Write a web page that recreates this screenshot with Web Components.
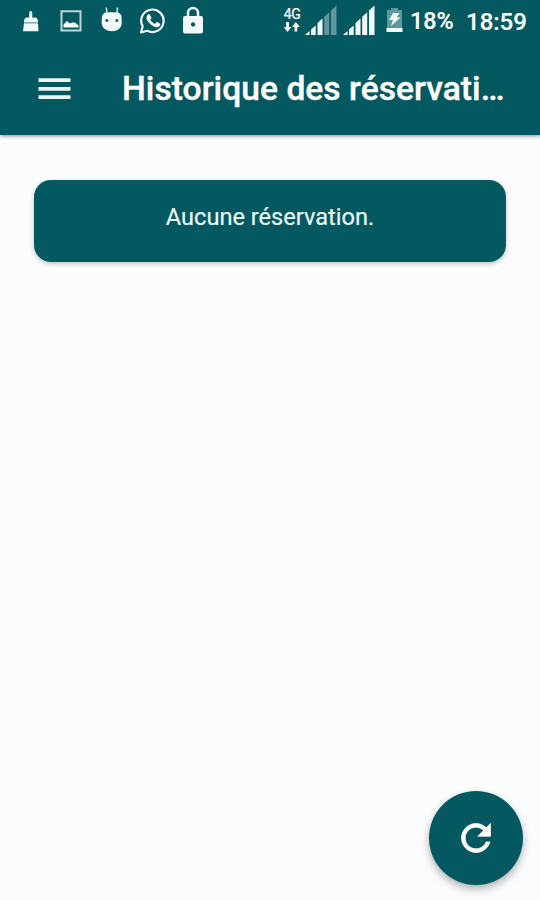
<!DOCTYPE html>
<html lang="fr">
<head>
<meta charset="utf-8">
<title>Historique des réservations</title>
<style>
  html, body {
    margin: 0;
    height: 100%;
  }
  body {
    --primary: #04585f;
    --page: #fbfcfe;
    font-family: Roboto, "Noto Sans", sans-serif;
    color: #fff;
    background: var(--page);
    overflow: hidden;
  }
</style>
</head>
<body>
<history-page>
  <status-bar slot="status" network="4G" battery="18%" time="18:59"></status-bar>
  <app-toolbar slot="toolbar">Historique des réservati…</app-toolbar>
  <info-card>Aucune réservation.</info-card>
  <refresh-button slot="fab"></refresh-button>
</history-page>

<script>
class HistoryPage extends HTMLElement {
    constructor() {
        super();
        this.attachShadow({ mode: "open" });
        this.shadowRoot.innerHTML = `
        <style>
        :host {
          display: flex;
          flex-direction: column;
          height: 900px;
          width: 540px;
          background: var(--page);
        }
        header {
          background: var(--primary);
          height: 135px;
          box-shadow: 0 1px 4px rgba(0, 0, 0, 0.45);
        }
        main {
          flex: 1;
          padding: 45px 34px 0;
        }
        footer {
          display: flex;
          justify-content: flex-end;
          padding: 0 17px 15.500px 0;
        }
        </style>
        <header>
          <slot name="status"></slot>
          <slot name="toolbar"></slot>
        </header>
        <main><slot></slot></main>
        <footer><slot name="fab"></slot></footer>`;
    }
}

class StatusBar extends HTMLElement {
    constructor() {
        super();
        this.attachShadow({ mode: "open" });
        this.shadowRoot.innerHTML = `
        <style>
        :host {
          display: flex;
          align-items: center;
          justify-content: space-between;
          box-sizing: border-box;
          height: 42px;
          padding: 0 14px 0 22px;
          font-weight: 500;
        }
        div {
          display: flex;
          align-items: center;
        }
        svg {
          display: block;
          fill: #f2f9fa;
        }
        .network {
          flex-direction: column;
          width: 18px;
          height: 42px;
          margin-right: 4px;
          padding-top: 9px;
          box-sizing: border-box;
        }
        .network span {
          font-size: 14px;
          font-weight: 400;
          letter-spacing: -0.500px;
          line-height: 10px;
          margin-bottom: 3px;
        }
        .signal {
          margin-right: 6px;
        }
        .battery {
          margin: 0 7px 0 11px;
        }
        span {
          white-space: nowrap;
          line-height: 42px;
          -webkit-text-stroke: 0.200px;
        }
        .level {
          font-size: 23.300px;
          width: 56px;
        }
        .time {
          font-size: 24px;
          width: 60px;
          padding-top: 2px;
        }
        </style>
        <div>
          <svg width="18" height="42" viewBox="0 0 18 42">
            <path d="M7.200 17.500V13L8 11h1.500l.8 2v4.500H13q3 0 3 4.500H2q0-4.500 3-4.500zM2 23.200h14l.5 8H1z"/>
            <path d="M2 22.600h14" stroke="#8fb8bc"/>
          </svg>
          <svg width="22" height="42" viewBox="0 0 22 42" style="margin-left: 20px">
            <path d="M1.500 11.200h19v19.300h-19z" fill="none" stroke="#bcd5d8" stroke-width="2"/>
            <path d="M3.500 27.500v-3l3.500-3.500 3 2.500 2-1h3l3.500 3v2z"/>
          </svg>
          <svg width="21" height="42" viewBox="0 0 21 42" style="margin-left: 19px">
            <path d="M5.300 7.500l.8 7M16.500 7.500l-.8 7" stroke="#d7e8ea" stroke-width="1.500"/>
            <path fill-rule="evenodd" d="M4 12.500Q10.500 12 17.500 12.500L20.200 15Q21 19 20.700 24Q19.500 31.200 11 31.200Q2 31.200 .7 24Q.4 19 1.300 15zM5.800 19a1.500 1.500 0 1 0 .1 0zM15.800 19a1.500 1.500 0 1 0 .1 0z"/>
          </svg>
          <svg width="26" height="42" viewBox="0 0 26 42" style="margin-left: 17px">
            <path d="M2 32.500l1.700-6.200A11.200 11.200 0 1 1 8.300 30.700z" fill="none" stroke="#f2f9fa" stroke-width="2.200" stroke-linejoin="round"/>
            <path d="M9 14.500q1-1 1.800 0l1.600 3q.3.700-1.200 2.300q1.700 3 4.700 4.200l1.600-1.700q.5-.4 1.100 0l2.600 1.500q.5 1-.8 2.400q-2 1.700-5.200.5q-4.300-1.700-7-6.200q-1.800-3.500.8-6z"/>
          </svg>
          <svg width="22" height="42" viewBox="0 0 22 42" style="margin-left: 16.500px">
            <path d="M6 17v-4a5 5 0 0 1 10 0v4" fill="none" stroke="#f2f9fa" stroke-width="2.500"/>
            <path fill-rule="evenodd" d="M3 16h16q2 0 2 2v13.500q0 2-2 2H3q-2 0-2-2V18q0-2 2-2zM11 22.300a2.200 2.200 0 1 0 .1 0z"/>
          </svg>
        </div>
        <div>
          <div class="network">
            <span></span>
            <svg width="18" height="10" viewBox="0 22 18 10">
              <path d="M3 22h3v5h2.500l-4 5L.7 27H3zM11.500 31.500V27H9l3.900-5 3.900 5h-2.500v4.500z"/>
            </svg>
          </div>
          <svg class="signal" width="32" height="42" viewBox="0 0 32 42">
            <path d="M0 35l4.500-4v4zM6 29.500l4.700-4v9.500H6zM12.500 23l5-4.500V35h-5z"/>
            <path d="M19.200 16.800l5-4.500V35h-5zM26 10.500l5.500-5V35H26z" fill="#5f979d"/>
          </svg>
          <svg width="32" height="42" viewBox="0 0 32 42">
            <path d="M0 35l4.500-4v4zM6 29.500l4.700-4v9.500H6zM12.500 23l5-4.500V35h-5zM19.200 16.800l5-4.500V35h-5zM26 10.500l5.500-5V35H26z"/>
          </svg>
          <svg class="battery" width="17" height="42" viewBox="0 0 17 42">
            <path d="M1 10h4V8h7v2h4v18H1z" fill="#5f979d"/>
            <path d="M.500 28h16v4H.5zM7 13h6.500l-3 4.500h4L5 26l2-6H3z"/>
          </svg>
          <span class="level"></span>
          <span class="time"></span>
        </div>`;
    }

    connectedCallback() {
        this.shadowRoot.querySelector(".network span").textContent = this.getAttribute("network");
        this.shadowRoot.querySelector(".level").textContent = this.getAttribute("battery");
        this.shadowRoot.querySelector(".time").textContent = this.getAttribute("time");
    }
}

class AppToolbar extends HTMLElement {
    constructor() {
        super();
        this.attachShadow({ mode: "open" });
        this.shadowRoot.innerHTML = `
        <style>
        :host {
          display: flex;
          align-items: center;
          height: 93px;
          padding-left: 38px;
        }
        button {
          display: flex;
          border: none;
          padding: 0;
          background: none;
          margin-right: 51px;
        }
        h1 {
          margin: 0;
          font-size: 33.600px;
          font-weight: 500;
          line-height: 92px;
          letter-spacing: 0.040px;
          white-space: nowrap;
          -webkit-text-stroke: 0.400px;
        }
        </style>
        <button aria-label="Menu">
          <svg width="33" height="22" viewBox="0 0 33 22" fill="#e9f5f5">
            <path d="M.5 .3h32v3.800H.5zM.5 8.900h32v3.800H.5zM.5 17.200h32v3.800H.5z"/>
          </svg>
        </button>
        <h1><slot></slot></h1>`;
    }
}

class InfoCard extends HTMLElement {
    constructor() {
        super();
        this.attachShadow({ mode: "open" });
        this.shadowRoot.innerHTML = `
        <style>
        :host {
          display: block;
          box-sizing: border-box;
          height: 82px;
          padding-top: 19px;
          border-radius: 17px;
          background: var(--primary);
          box-shadow: 0 2px 5px rgba(0, 0, 0, 0.22);
          text-align: center;
        }
        p {
          margin: 0;
          font-size: 23.600px;
          line-height: 36px;
          color: #e9f7f8;
          -webkit-text-stroke: 0.200px;
        }
        </style>
        <p><slot></slot></p>`;
    }
}

class RefreshButton extends HTMLElement {
    constructor() {
        super();
        this.attachShadow({ mode: "open" });
        this.shadowRoot.innerHTML = `
        <style>
        :host {
          display: block;
        }
        button {
          display: flex;
          align-items: center;
          justify-content: center;
          width: 94px;
          height: 94px;
          padding: 0;
          border: none;
          border-radius: 50%;
          background: var(--primary);
          box-shadow: 0 4px 8px rgba(0, 0, 0, 0.3);
        }
        </style>
        <button aria-label="Actualiser">
          <svg width="42" height="42" viewBox="0 0 512 512" fill="#fff" stroke="#fff" stroke-width="10">
            <path d="M256 388c-72.600 0-132-59.400-132-132s59.400-132 132-132c36.300 0 69.300 15.400 92.400 39.600L278 234h154V80l-51.700 51.700C348.400 99.800 304.400 80 256 80c-96.800 0-176 79.200-176 176s78.100 176 176 176c81 0 148.300-54.100 169.400-128h-46.600c-18.700 49.600-67.100 84-122.800 84z"/>
          </svg>
        </button>`;
    }
}

customElements.define("history-page", HistoryPage);
customElements.define("status-bar", StatusBar);
customElements.define("app-toolbar", AppToolbar);
customElements.define("info-card", InfoCard);
customElements.define("refresh-button", RefreshButton);
</script>
</body>
</html>
